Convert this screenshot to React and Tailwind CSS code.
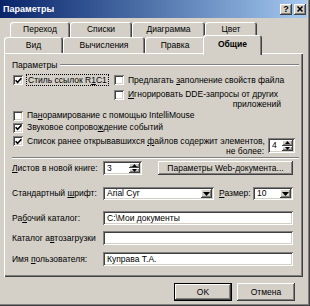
import React from "react";

const RAISED = "shadow-[inset_-1px_-1px_0_#404040,inset_1px_1px_0_#ffffff,inset_-2px_-2px_0_#808080]";
const SUNKEN = "shadow-[inset_1px_1px_0_#808080,inset_-1px_-1px_0_#ffffff,inset_2px_2px_0_#404040,inset_-2px_-2px_0_#d4d0c8]";

function Check({ checked }) {
  return (
    <span className={`w-[10px] h-[10px] shrink-0 bg-white flex items-center justify-center ${SUNKEN}`}>
      {checked && (
        <svg width="7" height="7" viewBox="0 0 7 7">
          <path d="M0.6 3.2 L2.6 5.3 L6.4 1.3" fill="none" stroke="#000" strokeWidth="1.6" />
        </svg>
      )}
    </span>
  );
}

function Tri({ up }) {
  return (
    <svg width="5" height="3" viewBox="0 0 5 3">
      <path d={up ? "M0 3 L2.5 0 L5 3 Z" : "M0 0 L5 0 L2.5 3 Z"} fill="#000" />
    </svg>
  );
}

function Spinner({ className, value }) {
  return (
    <div className={`bg-white flex items-stretch p-[2px] ${SUNKEN} ${className}`}>
      <div className="flex-1 flex items-center pl-[2px] leading-none">{value}</div>
      <div className="w-[11px] flex flex-col">
        <div className={`flex-1 bg-[#d4d0c8] flex items-center justify-center ${RAISED}`}>
          <Tri up />
        </div>
        <div className={`flex-1 bg-[#d4d0c8] flex items-center justify-center ${RAISED}`}>
          <Tri />
        </div>
      </div>
    </div>
  );
}

function Combo({ className, value }) {
  return (
    <div className={`bg-white flex items-stretch p-[2px] ${SUNKEN} ${className}`}>
      <div className="flex-1 flex items-center pl-[2px] leading-none whitespace-nowrap">{value}</div>
      <div className={`w-[11px] bg-[#d4d0c8] flex items-center justify-center ${RAISED}`}>
        <svg width="7" height="4" viewBox="0 0 7 4">
          <path d="M0 0 L7 0 L3.5 4 Z" fill="#000" />
        </svg>
      </div>
    </div>
  );
}

function Field({ value }) {
  return (
    <div className={`w-[190px] h-[14px] bg-white flex items-center pl-[4px] leading-none whitespace-nowrap ${SUNKEN}`}>
      {value}
    </div>
  );
}

function Tab({ className, children }) {
  return (
    <div
      className={`flex items-center justify-center rounded-t-[3px] bg-[#d4d0c8] leading-none shadow-[inset_1px_1px_0_#ffffff,inset_-1px_0_0_#404040,inset_-2px_0_0_#808080] ${className}`}
    >
      {children}
    </div>
  );
}

function U({ children }) {
  return <span className="underline underline-offset-[1px]">{children}</span>;
}

export default function App() {
  return (
    <div className="w-[310px] h-[306px] overflow-hidden bg-[#d4d0c8] text-black text-[8.5px] font-['Liberation_Sans',Arial,sans-serif] shadow-[inset_-1px_-1px_0_#404040,inset_-2px_-2px_0_#808080] flex flex-col">
      {/* Title bar */}
      <div className="h-[18px] mr-[3px] bg-linear-to-r from-[#0a246a] to-[#a6caf0] flex items-center justify-between pl-[3px] pr-[1px]">
        <span className="text-white font-bold text-[9px] leading-none">Параметры</span>
        <div className="flex gap-[2px]">
          <div className={`w-[12px] h-[11px] bg-[#d4d0c8] flex items-center justify-center font-bold text-[9px] leading-none ${RAISED}`}>
            ?
          </div>
          <div className={`w-[12px] h-[11px] bg-[#d4d0c8] flex items-center justify-center ${RAISED}`}>
            <svg width="6" height="6" viewBox="0 0 6 6">
              <path d="M0.5 0.5 L5.5 5.5 M5.5 0.5 L0.5 5.5" stroke="#000" strokeWidth="1.5" />
            </svg>
          </div>
        </div>
      </div>

      {/* Tabs */}
      <div className="mt-[4px] h-[15px] flex pl-[10px]">
        <Tab className="w-[60px]">Переход</Tab>
        <Tab className="w-[62px]">Списки</Tab>
        <Tab className="w-[73px]">Диаграмма</Tab>
        <Tab className="w-[52px]">Цвет</Tab>
      </div>
      <div className="h-[16px] flex items-end pl-[4px]">
        <Tab className="w-[59px] h-[16px]">Вид</Tab>
        <Tab className="w-[82px] h-[16px]">Вычисления</Tab>
        <Tab className="w-[60px] h-[16px]">Правка</Tab>
        <Tab className="relative z-10 w-[59px] h-[20px] -mb-[2px] -mx-[2px] font-bold pb-[2px]">Общие</Tab>
      </div>

      {/* Panel */}
      <div className="ml-[4px] w-[299px] h-[224px] flex flex-col pl-[8px] shadow-[inset_1px_1px_0_#ffffff,inset_-1px_-1px_0_#404040,inset_-2px_-2px_0_#808080]">
        <div className="mt-[7px] h-[10px] flex items-center leading-none">
          <span>Параметры</span>
          <div className="flex-1 ml-[3px] mr-[4px] h-[2px] border-t border-t-[#808080] border-b border-b-white" />
        </div>

        <div className="mt-[4px] h-[12px] flex items-center leading-none">
          <div className="w-[102px] flex items-center">
            <span className="ml-[1px]">
              <Check checked />
            </span>
            <span className="ml-[3px] px-[1px] py-[1px] border border-dotted border-black whitespace-nowrap">
              Стиль ссылок R<U>1</U>C1
            </span>
          </div>
          <Check />
          <span className="ml-[4px] whitespace-nowrap">
            Предлагать <U>з</U>аполнение свойств файла
          </span>
        </div>

        <div className="mt-[3px] ml-[102px] flex">
          <span className="mt-[1px]">
            <Check />
          </span>
          <div className="ml-[4px] w-[153px] leading-[10px] whitespace-nowrap">
            <div>
              <U>И</U>гнорировать DDE-запросы от других
            </div>
            <div className="text-right">приложений</div>
          </div>
        </div>

        <div className="mt-[1px] h-[11px] flex items-center leading-none">
          <span className="ml-[1px]">
            <Check />
          </span>
          <span className="ml-[4px] whitespace-nowrap">
            Па<U>н</U>орамирование с помощью IntelliMouse
          </span>
        </div>

        <div className="mt-[1px] h-[11px] flex items-center leading-none">
          <span className="ml-[1px]">
            <Check checked />
          </span>
          <span className="ml-[4px] whitespace-nowrap">
            Звуковое сопрово<U>ж</U>дение событий
          </span>
        </div>

        <div className="mt-[3px] flex">
          <span className="ml-[1px]">
            <Check checked />
          </span>
          <div className="ml-[4px] w-[237px] leading-[10px] whitespace-nowrap">
            <div>
              Список ранее открывавшихся <U>ф</U>айлов содержит элементов,
            </div>
            <div className="text-right">не более:</div>
          </div>
          <Spinner className="ml-[4px] mt-[2px] w-[27px] h-[15px]" value="4" />
        </div>

        <div className="mt-[1px] mr-[4px] h-[2px] border-t border-t-[#808080] border-b border-b-white" />

        <div className="mt-[2px] h-[14px] flex items-center leading-none">
          <span className="w-[91px] whitespace-nowrap">
            <U>Л</U>истов в новой книге:
          </span>
          <Spinner className="w-[39px] h-[14px]" value="3" />
          <div className={`ml-[16px] w-[135px] h-[14px] flex items-center justify-center whitespace-nowrap ${RAISED}`}>
            Параметры Web-документа...
          </div>
        </div>

        <div className="mt-[12px] h-[13px] flex items-center leading-none">
          <span className="w-[91px] whitespace-nowrap">
            Стандартный <U>ш</U>рифт:
          </span>
          <Combo className="w-[111px] h-[13px]" value="Arial Cyr" />
          <span className="ml-[5px] w-[34px] whitespace-nowrap">
            <U>Р</U>азмер:
          </span>
          <Combo className="w-[40px] h-[13px]" value="10" />
        </div>

        <div className="mt-[11px] h-[14px] flex items-center leading-none">
          <span className="w-[91px] whitespace-nowrap">
            Ра<U>б</U>очий каталог:
          </span>
          <Field value="C:\Мои документы" />
        </div>

        <div className="mt-[6px] h-[14px] flex items-center leading-none">
          <span className="w-[91px] whitespace-nowrap">
            Каталог а<U>в</U>тозагрузки
          </span>
          <Field value="" />
        </div>

        <div className="mt-[7px] h-[14px] flex items-center leading-none">
          <span className="w-[91px] whitespace-nowrap">
            Имя <U>п</U>ользователя:
          </span>
          <Field value="Куправа Т.А." />
        </div>
      </div>

      {/* Buttons */}
      <div className="mt-[6px] flex justify-end pr-[15px] gap-[5px]">
        <div className="w-[58px] h-[18px] border border-black">
          <div className={`w-full h-full flex items-center justify-center leading-none ${RAISED}`}>OK</div>
        </div>
        <div className={`w-[58px] h-[18px] flex items-center justify-center leading-none ${RAISED}`}>Отмена</div>
      </div>
    </div>
  );
}
